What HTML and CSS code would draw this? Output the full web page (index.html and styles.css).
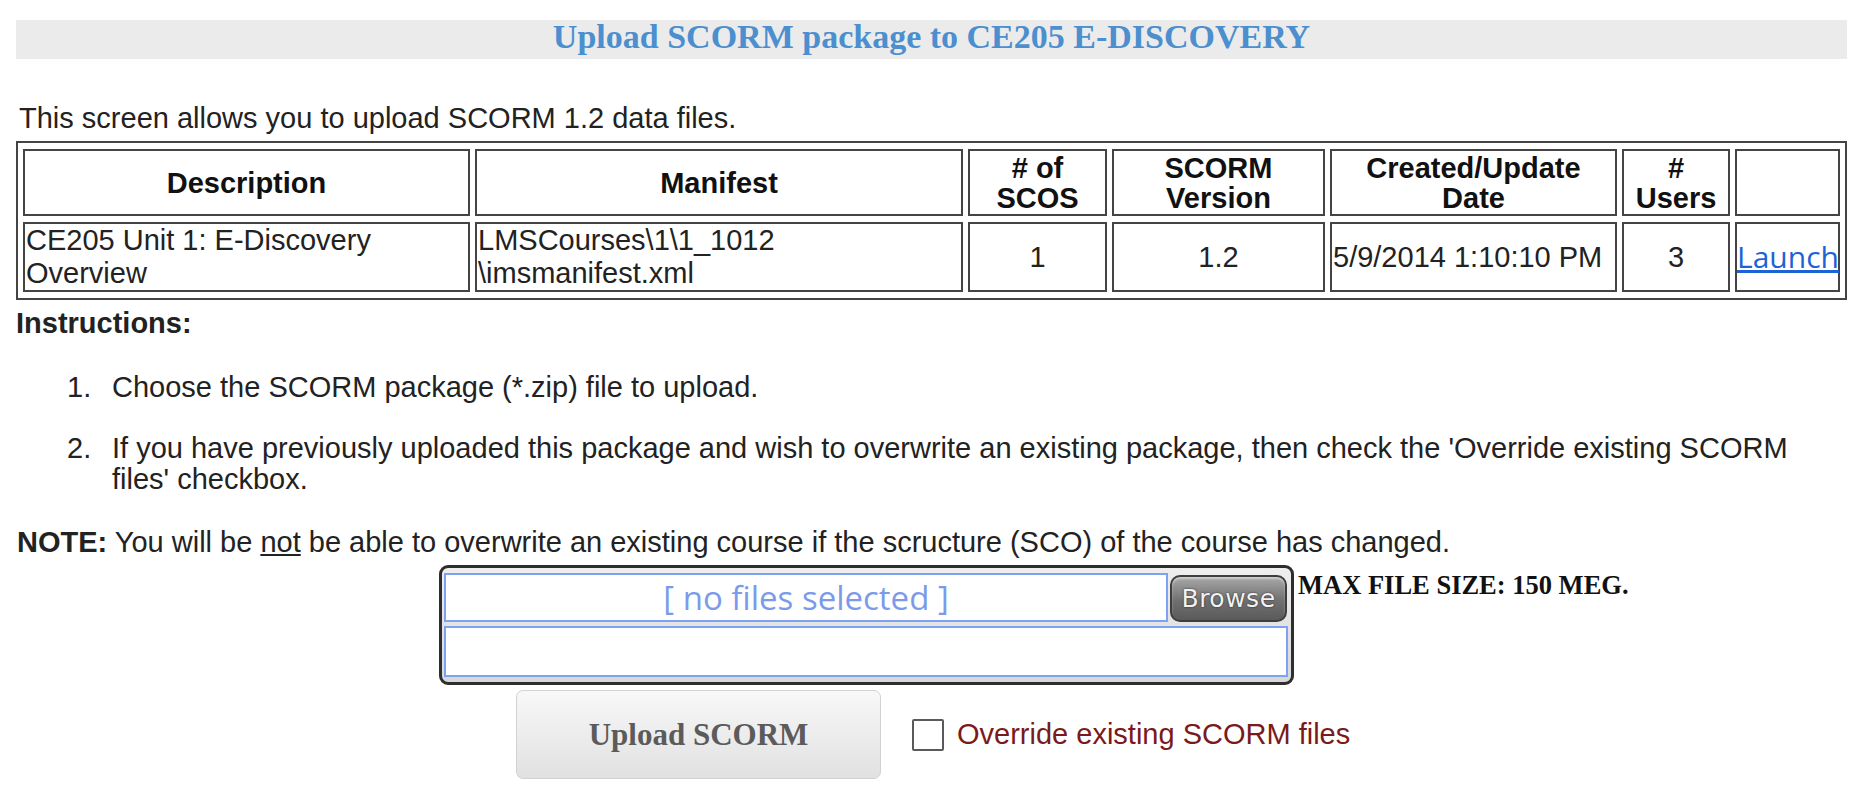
FILE: index.html
```html
<!DOCTYPE html>
<html lang="en">
<head>
<meta charset="utf-8">
<title>Upload SCORM package</title>
<link rel="stylesheet" href="styles.css">
</head>
<body>
<div class="page">
  <h1 class="title-bar">Upload SCORM package to CE205 E-DISCOVERY</h1>
  <p class="intro">This screen allows you to upload SCORM 1.2 data files.</p>
  <table class="pkg-table">
    <thead>
      <tr>
        <th class="c-desc">Description</th>
        <th class="c-man">Manifest</th>
        <th class="c-scos"># of<br>SCOS</th>
        <th class="c-ver">SCORM<br>Version</th>
        <th class="c-date">Created/Update<br>Date</th>
        <th class="c-users">#<br>Users</th>
        <th class="c-act"></th>
      </tr>
    </thead>
    <tbody>
      <tr>
        <td>CE205 Unit 1: E-Discovery Overview</td>
        <td>LMSCourses\1\1_1012<wbr>\imsmanifest.xml</td>
        <td class="center">1</td>
        <td class="center">1.2</td>
        <td>5/9/2014 1:10:10 PM</td>
        <td class="center">3</td>
        <td class="launch-cell"><a href="#" class="launch">Launch</a></td>
      </tr>
    </tbody>
  </table>
  <p class="instr-title">Instructions:</p>
  <ol class="steps">
    <li>Choose the SCORM package (*.zip) file to upload.</li>
    <li>If you have previously uploaded this package and wish to overwrite an existing package, then check the 'Override existing SCORM files' checkbox.</li>
  </ol>
  <p class="note"><b>NOTE:</b> You will be <u>not</u> be able to overwrite an existing course if the scructure (SCO) of the course has changed.</p>
  <div class="upload-row">
    <div class="file-box">
      <div class="file-line">
        <div class="file-name">[ no files selected ]</div>
        <button type="button" class="browse">Browse</button>
      </div>
      <div class="file-path"></div>
    </div>
    <div class="max-size">MAX FILE SIZE: 150 MEG.</div>
  </div>
  <div class="submit-row">
    <button type="button" class="upload-btn">Upload SCORM</button>
    <label class="override"><input type="checkbox" class="chk"><span>Override existing SCORM files</span></label>
  </div>
</div>
</body>
</html>
```

FILE: styles.css
```css
* {
  box-sizing: border-box;
}

body {
  margin: 0;
  font-family: "Liberation Sans", Arial, sans-serif;
  font-size: 29px;
  color: #222;
  background: #fff;
}

.page {
  margin-left: 16px;
  width: 1831px;
  padding-top: 20px;
}

.title-bar {
  margin: 0;
  height: 39px;
  background: #ebebeb;
  font-family: "Liberation Serif", "Times New Roman", serif;
  font-weight: bold;
  font-size: 34px;
  line-height: 34px;
  color: #4b8fcf;
  text-align: center;
}

.intro {
  margin: 44px 0 7px;
  padding-left: 3px;
  line-height: 31px;
}

.pkg-table {
  width: 1831px;
  table-layout: fixed;
  border: 2px solid #444;
  border-spacing: 5px 6px;
}

.pkg-table th,
.pkg-table td {
  border: 2px solid #444;
  padding: 0 1px;
  overflow: visible;
}

.pkg-table th {
  height: 67px;
  line-height: 30px;
  font-weight: bold;
  text-align: center;
  color: #111;
}

.pkg-table td {
  height: 70px;
  line-height: 33px;
  text-align: left;
}

.pkg-table td.center {
  text-align: center;
}

.pkg-table td.launch-cell {
  padding: 0;
  white-space: nowrap;
}

.c-desc { width: 447px; }
.c-man { width: 488px; }
.c-scos { width: 139px; }
.c-ver { width: 213px; }
.c-date { width: 287px; }
.c-users { width: 108px; }
.c-act { width: 105px; }

.launch {
  font-family: "Open Sans", sans-serif;
  font-size: 30px;
  color: #1d63d6;
  text-decoration: underline;
}

.instr-title {
  margin: 8px 0 0;
  font-weight: bold;
  line-height: 31px;
}

.steps {
  list-style: none;
  counter-reset: step;
  margin: 33px 0 32px;
  padding: 0 37px 0 51px;
}

.steps li {
  counter-increment: step;
  display: flex;
  line-height: 31px;
}

.steps li + li {
  margin-top: 30px;
}

.steps li::before {
  content: counter(step) ".";
  flex: none;
  width: 45px;
}

.note {
  margin: 0;
  padding-left: 1px;
  line-height: 31px;
}

.upload-row {
  display: flex;
  align-items: flex-start;
  margin-top: 7px;
  padding-left: 423px;
}

.file-box {
  width: 855px;
  height: 120px;
  border: 3px solid #2e2e2e;
  border-radius: 9px;
  background: linear-gradient(#eeeeee, #d8d8d8);
  padding: 5px 3px 5px 2px;
  display: flex;
  flex-direction: column;
  gap: 4px;
}

.file-line {
  display: flex;
  align-items: flex-start;
  gap: 2px;
}

.file-name {
  width: 724px;
  height: 49px;
  border: 2px solid #7da2f2;
  background: #fff;
  font-family: "Open Sans", sans-serif;
  font-size: 33px;
  line-height: 45px;
  color: #7b9bea;
  text-align: center;
}

.browse {
  width: 117px;
  height: 47px;
  margin-top: 2px;
  padding: 0;
  border: 2px solid #3e3e3e;
  border-radius: 10px;
  background: linear-gradient(#a8a8a8, #707070 55%, #5a5a5a);
  box-shadow: inset 0 2px 2px rgba(255, 255, 255, 0.45);
  color: #f2f2f2;
  font-family: "DejaVu Sans", Verdana, sans-serif;
  font-size: 25px;
  letter-spacing: 0.5px;
  text-shadow: 0 0 2px #222;
}

.file-path {
  width: 844px;
  height: 51px;
  border: 2px solid #7da2f2;
  background: #fff;
}

.max-size {
  margin: 5px 0 0 4px;
  font-family: "Liberation Serif", "Times New Roman", serif;
  font-weight: bold;
  font-size: 26.5px;
  line-height: 30px;
  color: #111;
  white-space: nowrap;
}

.submit-row {
  display: flex;
  align-items: center;
  margin-top: 5px;
  padding-left: 500px;
}

.upload-btn {
  width: 365px;
  height: 89px;
  border: 1px solid #d2d2d2;
  border-radius: 7px;
  background: linear-gradient(#f8f8f8, #e1e1e1);
  font-family: "Liberation Serif", "Times New Roman", serif;
  font-weight: bold;
  font-size: 31px;
  color: #5b5b5b;
}

.override {
  display: flex;
  align-items: center;
  gap: 13px;
  margin-left: 31px;
  color: #7b1a1a;
  line-height: 31px;
}

.chk {
  appearance: none;
  -webkit-appearance: none;
  width: 32px;
  height: 32px;
  margin: 0;
  border: 2px solid #5a5a5a;
  border-radius: 2px;
  background: #fff;
}
```
